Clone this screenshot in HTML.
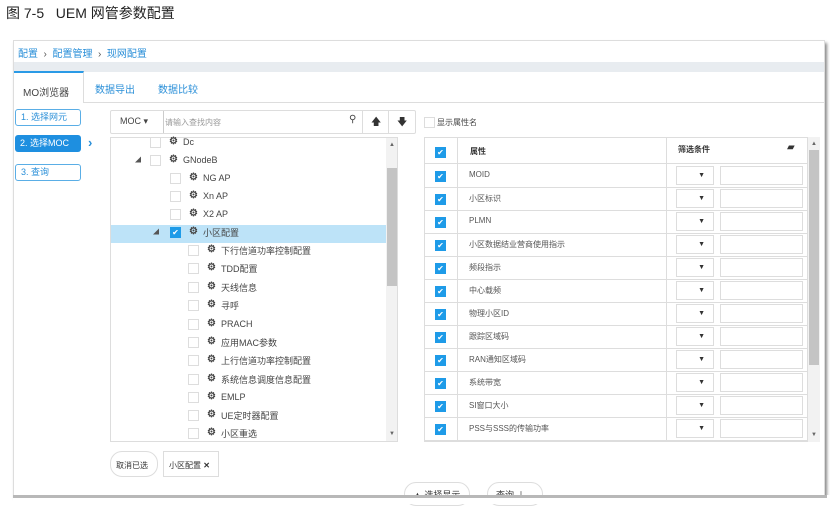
<!DOCTYPE html>
<html><head><meta charset="utf-8"><style>
*{margin:0;padding:0;box-sizing:border-box}
body{width:830px;height:504px;background:#fff;position:relative;overflow:hidden;font-family:"Liberation Sans","Noto Sans CJK SC",sans-serif;color:#555}
.a{position:absolute}
.t{font-size:9px;white-space:nowrap}
.cb{position:absolute;width:11px;height:11px;border:1px solid #ddd;background:#fff}
.cc{position:absolute;width:11px;height:11px;background:#1e9be8;color:#fff;font-size:8px;line-height:11px;text-align:center}
.row{position:absolute;height:18px;display:flex;align-items:center;white-space:nowrap;font-size:9px;color:#444}
.row .b{width:11px;height:11px;border:1px solid #ddd;background:#fff;flex:none}
.row .bc{width:11px;height:11px;background:#1e9be8;color:#fff;font-size:8px;line-height:11px;text-align:center;flex:none}
.row .g{font-size:10px;font-weight:bold;color:#444;margin:0 5px 0 8px;line-height:18px}
.sel{position:absolute;width:38px;height:19px;border:1px solid #ddd;font-size:7px;text-align:right;padding-right:8px;line-height:18px;color:#333}
.inp{position:absolute;width:83px;height:19px;border:1px solid #ddd}
.step{position:absolute;left:15px;width:66px;height:17px;border-radius:3px;font-size:9px;line-height:15px;padding-left:5px;white-space:nowrap}
</style></head><body>
<div class="a" style="left:6px;top:3px;font-size:14px;color:#222">图 7-5&nbsp;&nbsp;&nbsp;UEM 网管参数配置</div>
<div class="a" style="left:13px;top:40px;width:812px;height:456px;border:1px solid #ddd;background:#fff;box-shadow:2px 3px 3px #888"></div>
<div class="a t" style="left:18px;top:45px;font-size:10px;color:#2a8fd8">配置 <span style="color:#555">&nbsp;›&nbsp;</span> 配置管理 <span style="color:#555">&nbsp;›&nbsp;</span> 现网配置</div>
<div class="a" style="left:14px;top:62px;width:810px;height:10px;background:#e8ecf0"></div>
<div class="a" style="left:14px;top:102px;width:810px;height:1px;background:#ddd"></div>
<div class="a" style="left:14px;top:71px;width:70px;height:32px;background:#fff;border-top:2px solid #2a9ae6;border-right:1px solid #ddd"></div>
<div class="a t" style="left:23px;top:84px;font-size:10px;color:#444">MO浏览器</div>
<div class="a t" style="left:95px;top:81px;font-size:10px;color:#2a8fd8">数据导出</div>
<div class="a t" style="left:158px;top:81px;font-size:10px;color:#2a8fd8">数据比较</div>
<div class="step" style="top:109px;border:1px solid #5aaee6;color:#2a8fd8">1. 选择网元</div>
<div class="step" style="top:135px;background:#1e8fe0;color:#fff;line-height:17px">2. 选择MOC</div>
<div class="a" style="left:88px;top:135px;color:#2a8fd8;font-size:13px;font-weight:bold">›</div>
<div class="step" style="top:164px;border:1px solid #5aaee6;color:#2a8fd8">3. 查询</div>
<div class="a" style="left:110px;top:110px;width:306px;height:24px;border:1px solid #ddd;border-radius:2px"></div>
<div class="a t" style="left:120px;top:116px;color:#444">MOC ▾</div>
<div class="a" style="left:163px;top:111px;width:1px;height:22px;background:#ccc"></div>
<div class="a t" style="left:165px;top:117px;font-size:8px;color:#999">请输入查找内容</div>
<div class="a" style="left:349px;top:114px;font-size:10px;color:#444">⚲</div>
<div class="a" style="left:362px;top:111px;width:1px;height:22px;background:#ddd"></div>
<div class="a" style="left:388px;top:111px;width:1px;height:22px;background:#ddd"></div>
<div class="a" style="left:371px;top:115px;font-size:10px;color:#333">🡅</div>
<div class="a" style="left:397px;top:115px;font-size:10px;color:#333">🡇</div>
<div class="a" style="left:110px;top:137px;width:288px;height:305px;border:1px solid #ddd;overflow:hidden">
 <div class="a" style="left:0;top:87px;width:275px;height:18px;background:#bde3f8"></div>
 <div class="a" style="left:275px;top:0;width:12px;height:305px;background:#f2f2f2"></div>
 <div class="a" style="left:276px;top:30px;width:10px;height:118px;background:#c4c4c4"></div>
 <div class="a" style="left:278px;top:4px;font-size:6px;color:#666">▲</div>
 <div class="a" style="left:278px;top:293px;font-size:6px;color:#666">▼</div>
</div>
<div id="tree"></div>
<div class="cb" style="left:424px;top:117px"></div>
<div class="a t" style="left:437px;top:117px;font-size:8px;color:#444">显示属性名</div>
<div class="a" style="left:424px;top:137px;width:384px;height:305px;border:1px solid #ddd;overflow:hidden" id="tbl"></div>
<div class="a" style="left:808px;top:137px;width:12px;height:305px;background:#f2f2f2"></div>
<div class="a" style="left:809px;top:150px;width:10px;height:215px;background:#c4c4c4"></div>
<div class="a" style="left:811px;top:141px;font-size:6px;color:#666">▲</div>
<div class="a" style="left:811px;top:432px;font-size:6px;color:#666">▼</div>
<div class="a t" style="left:110px;top:451px;width:48px;height:26px;border:1px solid #ddd;border-radius:12px;font-size:8px;color:#333;padding:8px 5px">取消已选</div>
<div class="a t" style="left:163px;top:451px;width:56px;height:26px;border:1px solid #ddd;font-size:8px;color:#333;padding:8px 5px">小区配置 <b>✕</b></div>
<div class="a t" style="left:404px;top:482px;width:66px;height:24px;border:1px solid #ddd;border-radius:12px;font-size:9px;color:#333;padding:5px 8px">▲ 选择显示</div>
<div class="a t" style="left:487px;top:482px;width:56px;height:24px;border:1px solid #ddd;border-radius:12px;font-size:9px;color:#333;padding:5px 8px">查询 ⊥</div>
<div class="a" style="left:13px;top:495px;width:817px;height:9px;background:#fff"></div>
<div class="a" style="left:13px;top:495px;width:814px;height:3px;background:#888;opacity:.6"></div>
<script>
var tr=[["Dc",150,142,0],["GNodeB",150,160,1],["NG AP",170,178,0],["Xn AP",170,196,0],["X2 AP",170,214,0],["小区配置",170,232,2],
["下行信道功率控制配置",188,250],["TDD配置",188,268],["天线信息",188,287],["寻呼",188,305],["PRACH",188,324],["应用MAC参数",188,342],
["上行信道功率控制配置",188,360],["系统信息调度信息配置",188,379],["EMLP",188,397],["UE定时器配置",188,415],["小区重选",188,433]];
var h="";
tr.forEach(function(r){var x=r[1],y=r[2];
 if(r[3]==1)h+='<div class="a" style="left:135px;top:'+(y-5)+'px;font-size:6px">◢</div>';
 if(r[3]==2)h+='<div class="a" style="left:153px;top:'+(y-5)+'px;font-size:6px">◢</div>';
 if(y<138){return;}
 h+='<div class="row" style="left:'+x+'px;top:'+(y-9)+'px">'+(r[3]==2?'<div class="bc">✔</div>':'<div class="b"></div>')+'<span class="g">⚙</span><span>'+r[0]+'</span></div>';});
document.getElementById('tree').innerHTML=h;
var rows=["MOID","小区标识","PLMN","小区数据结业营商使用指示","频段指示","中心载频","物理小区ID","跟踪区域码","RAN通知区域码","系统带宽","SI窗口大小","PSS与SSS的传输功率","上行小区边缘..."];
var t='<div class="a" style="left:0;top:0;width:384px;height:26px;border-bottom:1px solid #ddd"></div>';
t+='<div class="a" style="left:32px;top:0;width:1px;height:305px;background:#ddd"></div><div class="a" style="left:241px;top:0;width:1px;height:305px;background:#ddd"></div>';
t+='<div class="cc" style="left:10px;top:9px">✔</div><div class="a t" style="left:45px;top:8px;font-size:8px;color:#333;font-weight:bold">属性</div>';
t+='<div class="a t" style="left:253px;top:6px;font-size:8px;color:#333;font-weight:bold">筛选条件</div><div class="a" style="left:362px;top:4px;font-size:10px;color:#333">▰</div>';
rows.forEach(function(r,i){var y=27+i*23;
 t+='<div class="a" style="left:0;top:'+(y+22)+'px;width:384px;height:1px;background:#ddd"></div>';
 t+='<div class="cc" style="left:10px;top:'+(y+6)+'px">✔</div>';
 t+='<div class="a t" style="left:44px;top:'+(y+5)+'px;font-size:8px;color:#555">'+r+'</div>';
 t+='<div class="sel" style="left:251px;top:'+(y+1)+'px">▼</div><div class="inp" style="left:295px;top:'+(y+1)+'px"></div>';});
document.getElementById('tbl').innerHTML=t;
</script>
</body></html>
